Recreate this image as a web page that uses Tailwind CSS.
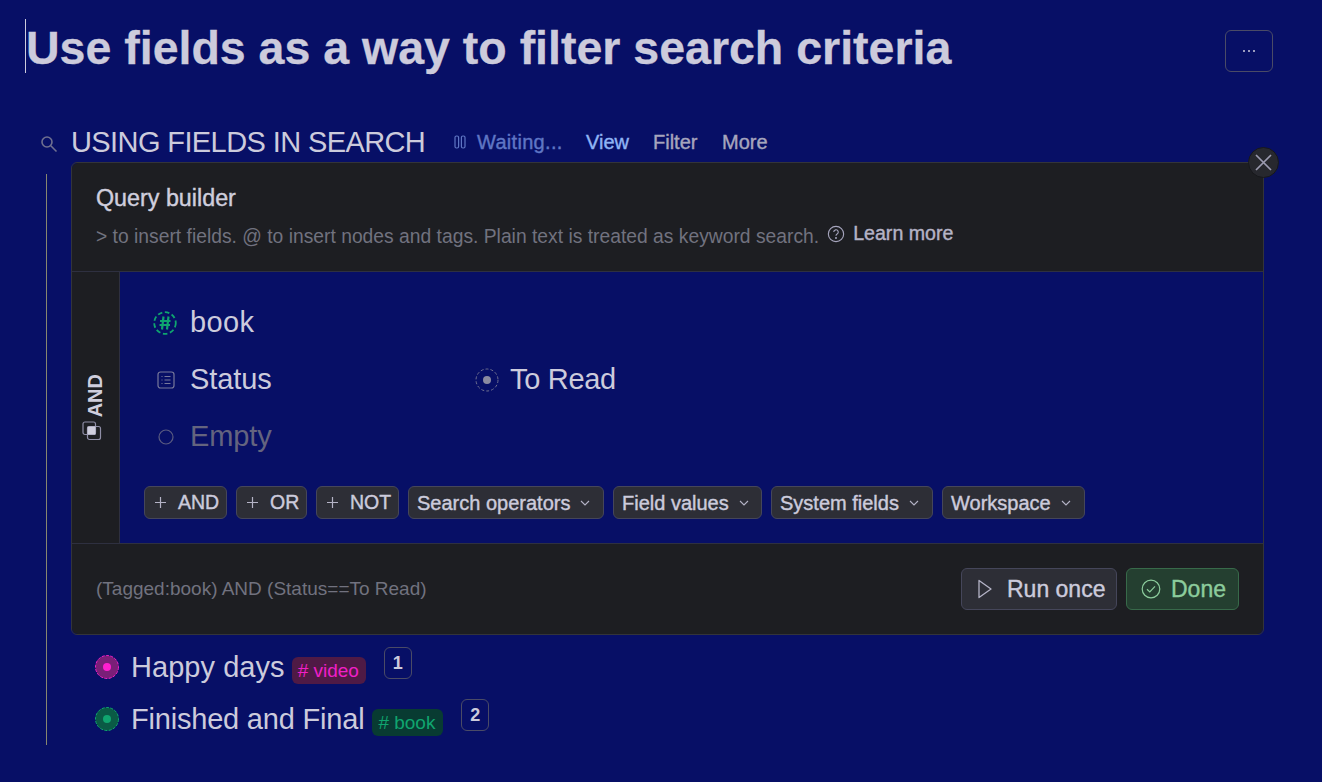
<!DOCTYPE html>
<html lang="en">
<head>
  <meta charset="UTF-8" />
  <title>Use fields as a way to filter search criteria</title>
  <script src="https://cdn.jsdelivr.net/npm/@tailwindcss/browser@4"></script>
</head>
<body class="bg-[#070f66] h-[782px] overflow-hidden font-['Liberation_Sans',sans-serif] text-[#cccbdc]">

  <!-- page title -->
  <div class="flex items-start justify-between pl-[25px] pr-[49px] pt-[19px] h-[122px]">
    <h1 class="h-[54px] border-l border-[#cccbdc] text-[46.5px] leading-[58px] font-bold [-webkit-text-stroke:0.3px] whitespace-nowrap">Use fields as a way to filter search criteria</h1>
    <button class="mt-[11px] w-[48px] h-[42px] rounded-md border border-[#4a4b66] flex items-center justify-center">
      <svg width="14" height="4" viewBox="0 0 14 4" fill="#cccbdc"><circle cx="2" cy="2" r="1"/><circle cx="7" cy="2" r="1"/><circle cx="12" cy="2" r="1"/></svg>
    </button>
  </div>

  <!-- search node header -->
  <div class="flex items-center h-[40px] pl-[40px]">
    <svg width="18" height="18" viewBox="0 0 18 18" fill="none" stroke="#6f7090" stroke-width="1.6" class="mr-[13px] mt-[3px]"><circle cx="7" cy="7" r="5"/><path d="M10.8 10.8 16.5 16.5"/></svg>
    <span class="text-[29px] leading-[40px] tracking-[-0.6px] whitespace-nowrap w-[383px]">USING FIELDS IN SEARCH</span>
    <svg width="12" height="14" viewBox="0 0 12 14" fill="none" stroke="#5f76c4" stroke-width="1.2" class="mr-[11px]"><rect x="1" y="1" width="3.6" height="12" rx="1.5"/><rect x="7.4" y="1" width="3.6" height="12" rx="1.5"/></svg>
    <span class="text-[20px] tracking-[0.3px] [-webkit-text-stroke:0.4px] text-[#5f76c4] w-[109px] whitespace-nowrap">Waiting...</span>
    <span class="text-[20px] [-webkit-text-stroke:0.4px] text-[#8fb4f5] w-[67px]">View</span>
    <span class="text-[20px] [-webkit-text-stroke:0.4px] text-[#a6a5bd] w-[69px]">Filter</span>
    <span class="text-[20px] [-webkit-text-stroke:0.4px] text-[#a6a5bd]">More</span>
  </div>

  <div class="flex pl-[46px]">
    <!-- outline line -->
    <div class="w-px h-[571px] mt-[12px] bg-[#87866f]"></div>

    <div class="ml-[24px] w-[1193px]">
      <!-- query builder card -->
      <div class="relative w-full h-[473px] rounded-md border border-[#33343a] flex flex-col">
        <button class="absolute -top-[16px] -right-[16px] w-[31px] h-[31px] rounded-full bg-[#27282e] border border-[#17181c] flex items-center justify-center">
          <svg width="19" height="19" viewBox="0 0 19 19" stroke="#9c9bb0" stroke-width="1.7" fill="none"><path d="M2 2 17 17M17 2 2 17"/></svg>
        </button>

        <div class="h-[109px] bg-[#1d1e22] rounded-t-md border-b border-[#2e3040] px-[24px] pt-[21px]">
          <div class="text-[23.3px] leading-[28px] [-webkit-text-stroke:0.4px] text-[#cfcedd]">Query builder</div>
          <div class="flex items-center mt-[9px] h-[28px]">
            <span class="mt-[5px] text-[19.3px] text-[#71727f] whitespace-nowrap">&gt; to insert fields. @ to insert nodes and tags. Plain text is treated as keyword search.</span>
            <svg width="18" height="18" viewBox="0 0 16 16" fill="none" stroke="#a6a5bd" stroke-width="1" class="ml-[8px] -mt-[3px]"><circle cx="8" cy="8" r="6.8"/><path d="M6 6.3a2 2 0 1 1 3 1.7c-.7.4-1 .8-1 1.5"/><circle cx="8" cy="11.6" r=".4"/></svg>
            <span class="ml-[8px] -mt-[2px] text-[19.6px] [-webkit-text-stroke:0.4px] text-[#b4b3c6] whitespace-nowrap">Learn more</span>
          </div>
        </div>

        <div class="flex-1 flex min-h-0">
          <!-- AND rail -->
          <div class="w-[48px] bg-[#1d1e22] flex items-center justify-center border-r border-[#2e3040]">
            <div class="flex flex-col items-center gap-[4px] -translate-x-[1px]">
              <span class="[writing-mode:vertical-rl] rotate-180 text-[20px] font-bold text-[#cfcedd] leading-none">AND</span>
              <svg width="20" height="20" viewBox="0 0 20 20" fill="none" stroke="#8f8ea6" stroke-width="1.2" class="-translate-x-[3px]"><rect x="1" y="1" width="12.5" height="12.5" rx="2"/><rect x="5.5" y="5.5" width="13" height="13" rx="2"/><rect x="5.5" y="5.5" width="8" height="8" fill="#cfcedd" stroke="none"/></svg>
            </div>
          </div>

          <div class="flex-1 pt-[22px] pl-[24px]">
            <div class="flex items-center h-[57px]">
              <span class="w-[46px] flex pl-[9px]">
                <svg width="24" height="24" viewBox="0 0 24 24" fill="none" stroke="#0fa56f"><circle cx="12" cy="12" r="10.8" stroke-width="1.8" stroke-dasharray="4.6 2.6"/><path d="M10.5 5.5 9 18.5M15.5 5.5 14 18.5M7 10h10.5M6.5 14h10.5" stroke-width="2.2"/></svg>
              </span>
              <span class="text-[29px] tracking-[0.4px]">book</span>
            </div>
            <div class="flex items-center h-[57px]">
              <span class="w-[46px] flex pl-[13px]">
                <svg width="18" height="18" viewBox="0 0 18 18" fill="none" stroke="#77789a" stroke-width="1.2"><rect x="1" y="1" width="16" height="16" rx="2.5"/><path d="M7.5 5.5h6M7.5 9h6M7.5 12.5h6M4.5 5.5h1M4.5 9h1M4.5 12.5h1"/></svg>
              </span>
              <span class="text-[29px] tracking-[-0.1px] w-[285px]">Status</span>
              <span class="w-[36px] flex">
                <svg width="24" height="24" viewBox="0 0 24 24" fill="none"><circle cx="12" cy="12" r="11" stroke="#6f7090" stroke-width="1" stroke-dasharray="3 2"/><circle cx="12" cy="12" r="4" fill="#8a8aa0"/></svg>
              </span>
              <span class="text-[29px] tracking-[-0.3px] -ml-[1px]">To Read</span>
            </div>
            <div class="flex items-center h-[57px]">
              <span class="w-[46px] flex pl-[13px]">
                <svg width="18" height="18" viewBox="0 0 18 18" fill="none" stroke="#5a5b80" stroke-width="1.2"><circle cx="9" cy="9" r="7"/></svg>
              </span>
              <span class="text-[29px] tracking-[-0.1px] text-[#64647f]">Empty</span>
            </div>

            <!-- operator chips -->
            <div class="flex gap-[9px] mt-[21px] text-[20px] [-webkit-text-stroke:0.4px]">
              <button class="w-[83px] h-[33px] pl-[9px] rounded-md bg-[#2d2e36] border border-[#45465a] flex items-center gap-[11px] text-[19.5px]">
                <svg width="13" height="13" viewBox="0 0 13 13" stroke="#b4b3c6" stroke-width="1.2"><path d="M6.5 1v11M1 6.5h11"/></svg>AND</button>
              <button class="w-[71px] h-[33px] pl-[9px] rounded-md bg-[#2d2e36] border border-[#45465a] flex items-center gap-[11px] text-[19.5px]">
                <svg width="13" height="13" viewBox="0 0 13 13" stroke="#b4b3c6" stroke-width="1.2"><path d="M6.5 1v11M1 6.5h11"/></svg>OR</button>
              <button class="w-[83px] h-[33px] pl-[9px] rounded-md bg-[#2d2e36] border border-[#45465a] flex items-center gap-[11px] text-[19.5px]">
                <svg width="13" height="13" viewBox="0 0 13 13" stroke="#b4b3c6" stroke-width="1.2"><path d="M6.5 1v11M1 6.5h11"/></svg>NOT</button>
              <button class="w-[196px] h-[33px] pl-[8px] rounded-md bg-[#2d2e36] border border-[#45465a] flex items-center gap-[10px] whitespace-nowrap">Search operators
                <svg width="10" height="6" viewBox="0 0 10 6" fill="none" stroke="#b4b3c6" stroke-width="1.1"><path d="M1 1l4 4 4-4"/></svg></button>
              <button class="w-[149px] h-[33px] pl-[8px] rounded-md bg-[#2d2e36] border border-[#45465a] flex items-center gap-[10px] whitespace-nowrap">Field values
                <svg width="10" height="6" viewBox="0 0 10 6" fill="none" stroke="#b4b3c6" stroke-width="1.1"><path d="M1 1l4 4 4-4"/></svg></button>
              <button class="w-[162px] h-[33px] pl-[8px] rounded-md bg-[#2d2e36] border border-[#45465a] flex items-center gap-[10px] whitespace-nowrap">System fields
                <svg width="10" height="6" viewBox="0 0 10 6" fill="none" stroke="#b4b3c6" stroke-width="1.1"><path d="M1 1l4 4 4-4"/></svg></button>
              <button class="w-[143px] h-[33px] pl-[8px] rounded-md bg-[#2d2e36] border border-[#45465a] flex items-center gap-[10px] whitespace-nowrap">Workspace
                <svg width="10" height="6" viewBox="0 0 10 6" fill="none" stroke="#b4b3c6" stroke-width="1.1"><path d="M1 1l4 4 4-4"/></svg></button>
            </div>
          </div>
        </div>

        <!-- footer -->
        <div class="h-[91px] bg-[#1d1e22] rounded-b-md border-t border-[#2e3040] flex items-center justify-between pl-[24px] pr-[24px]">
          <span class="text-[19px] text-[#71727f]">(Tagged:book) AND (Status==To Read)</span>
          <div class="flex gap-[9px]">
            <button class="w-[156px] h-[42px] pl-[15px] rounded-md bg-[#2d2e36] border border-[#45465a] flex items-center gap-[14px] text-[23px] [-webkit-text-stroke:0.4px]">
              <svg width="16" height="20" viewBox="0 0 16 20" fill="none" stroke="#b4b3c6" stroke-width="1.3"><path d="M2 1.5 14 10 2 18.5Z" stroke-linejoin="round"/></svg>Run once</button>
            <button class="w-[113px] h-[42px] pl-[14px] rounded-md bg-[#243f30] border border-[#386a4a] flex items-center gap-[10px] text-[23px] [-webkit-text-stroke:0.4px] text-[#8ccc9c]">
              <svg width="20" height="20" viewBox="0 0 20 20" fill="none" stroke="#8ccc9c" stroke-width="1.2"><circle cx="10" cy="10" r="8.8"/><path d="M6 10.3l2.8 2.7L14 7.3"/></svg>Done</button>
          </div>
        </div>
      </div>

      <!-- search results -->
      <div class="pl-[24px] pt-[7px]">
        <div class="flex h-[52px] items-center">
          <svg width="24" height="24" viewBox="0 0 24 24" class="shrink-0 -mt-[2px]"><circle cx="12" cy="12" r="11.5" fill="#7a1f78" stroke="#f01fc8" stroke-width="1" stroke-dasharray="3 1.4"/><circle cx="12" cy="12" r="4" fill="#ff1fd0"/></svg>
          <span class="ml-[12px] text-[29px] tracking-[0.05px]">Happy days</span>
          <span class="ml-[7px] mt-[4px] w-[74px] h-[27px] pl-[6px] rounded-md bg-[#4f1a45] text-[#f01fc8] text-[19px] leading-[27px] whitespace-nowrap"># video</span>
          <span class="ml-[18px] -mt-[8px] w-[28px] h-[32px] rounded-md border border-[#4a4b66] flex items-center justify-center text-[18px] font-bold -translate-y-[1px]">1</span>
        </div>
        <div class="flex h-[52px] items-center">
          <svg width="24" height="24" viewBox="0 0 24 24" class="shrink-0 -mt-[2px]"><circle cx="12" cy="12" r="11.5" fill="#0a5a45" stroke="#10a56f" stroke-width="1" stroke-dasharray="3 1.4"/><circle cx="12" cy="12" r="4" fill="#10a56f"/></svg>
          <span class="ml-[12px] text-[29px] tracking-[-0.2px] whitespace-nowrap">Finished and Final</span>
          <span class="ml-[8px] mt-[4px] w-[71px] h-[27px] pl-[6px] rounded-md bg-[#083b32] text-[#10a56f] text-[19px] leading-[27px] whitespace-nowrap"># book</span>
          <span class="ml-[18px] -mt-[8px] w-[28px] h-[32px] rounded-md border border-[#4a4b66] flex items-center justify-center text-[18px] font-bold -translate-y-[1px]">2</span>
        </div>
      </div>
    </div>
  </div>
</body>
</html>
